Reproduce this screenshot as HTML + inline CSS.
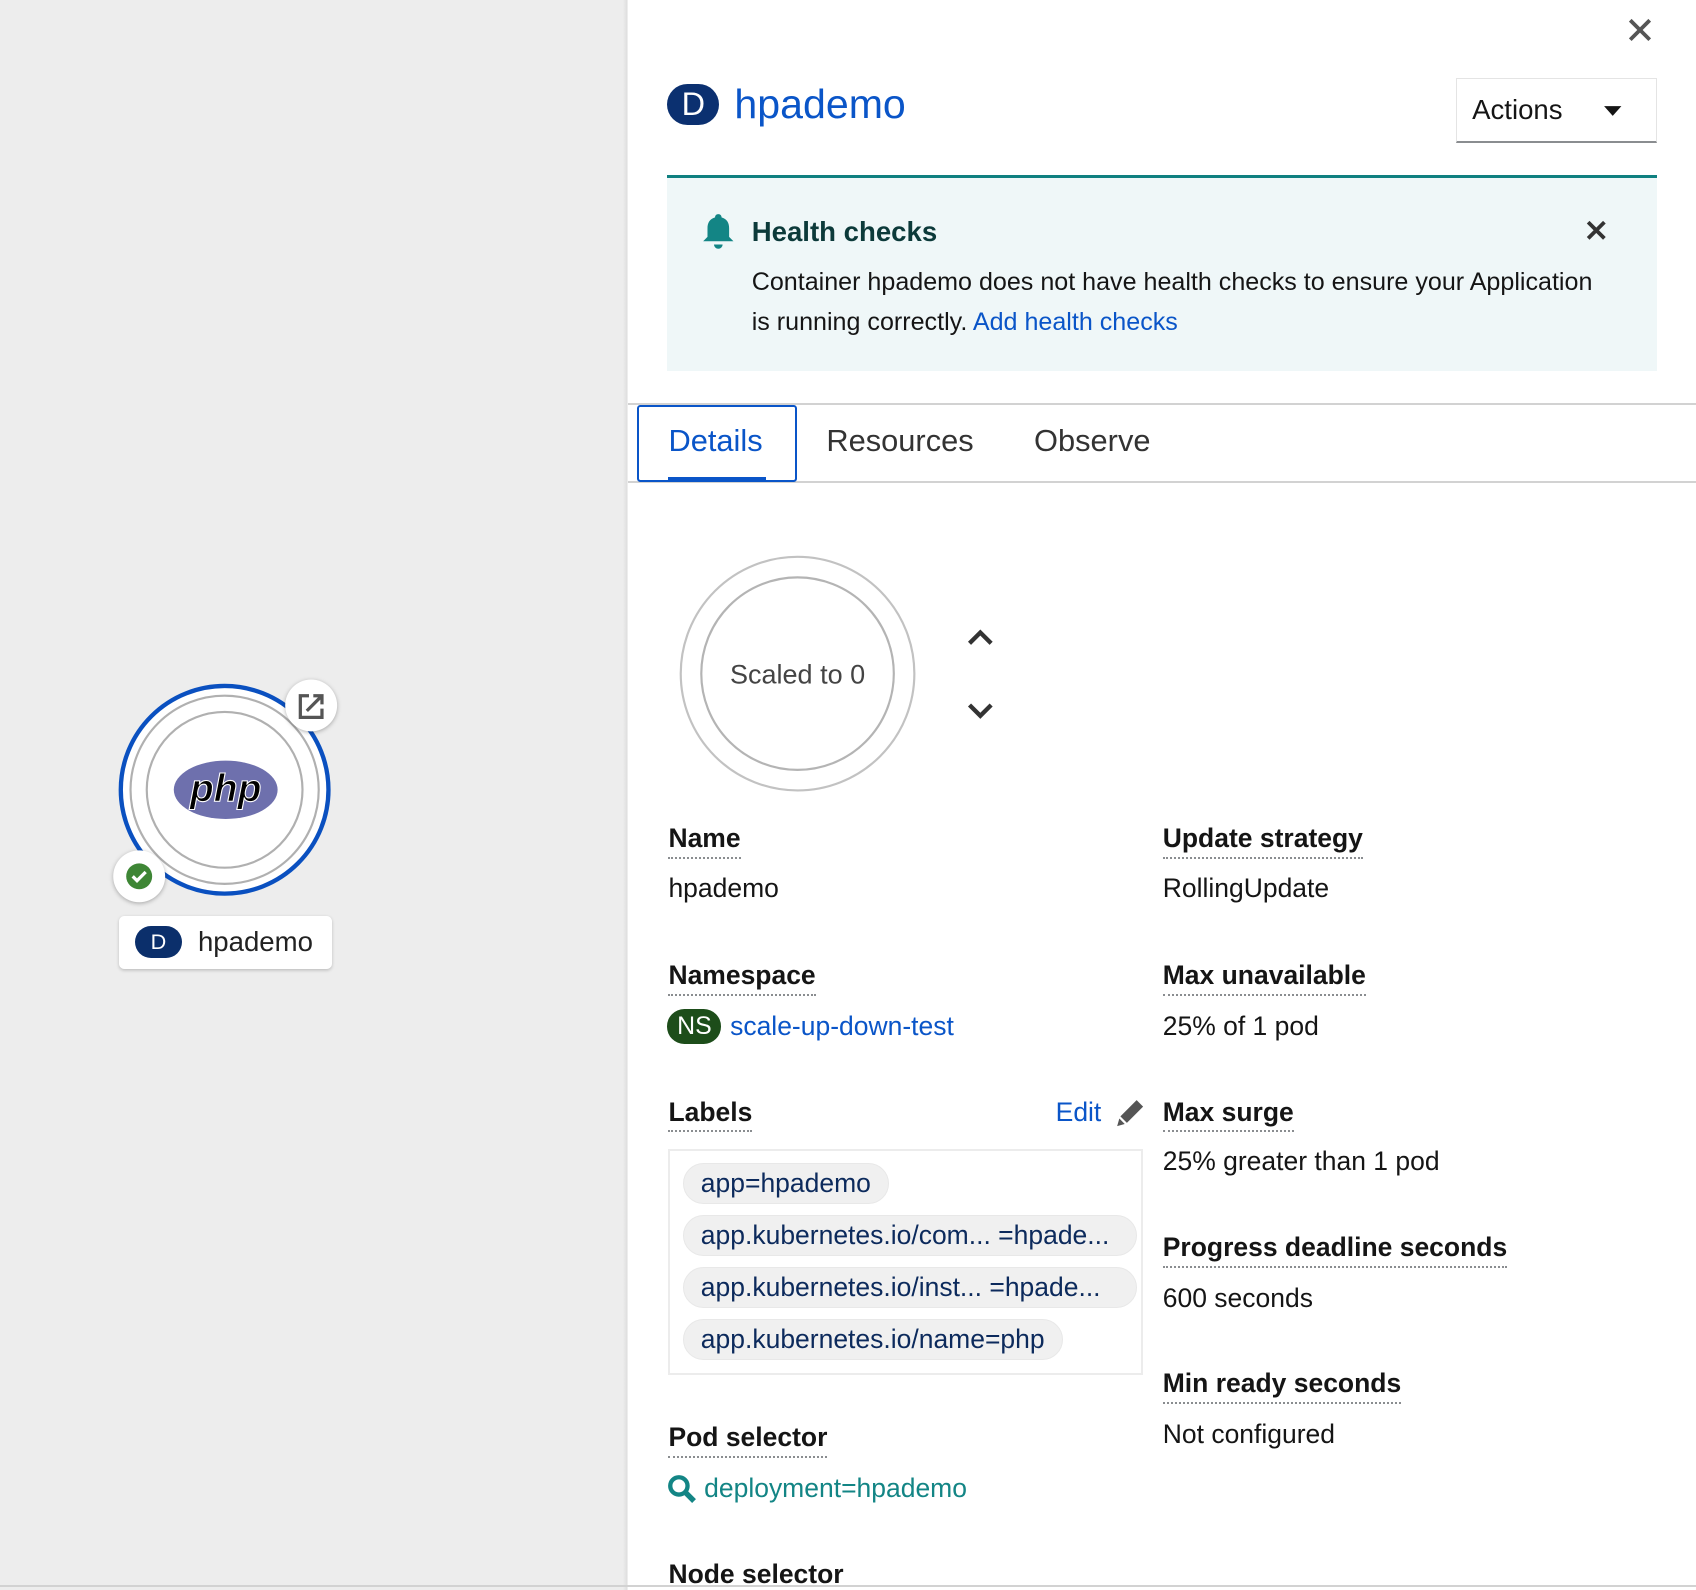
<!DOCTYPE html>
<html><head><meta charset="utf-8"><style>
html,body{margin:0;padding:0;width:1696px;height:1590px;overflow:hidden;background:#fff}
#w{position:relative;width:1568px;height:1470px;zoom:1.08163;font-family:"Liberation Sans",sans-serif;color:#151515}
.a{position:absolute;white-space:nowrap}
.lbl{font-weight:bold;font-size:24.5px;border-bottom:2px dotted #8a8d90;padding-bottom:2px;line-height:30px}
.val{font-size:24.5px;line-height:30px}
.chip{position:absolute;left:631px;height:38px;border-radius:19px;background:#f0f0f0;border:1px solid #e8e8e8;box-sizing:border-box;font-size:24.5px;line-height:36px;color:#0c2a5c;padding:0 16px;white-space:nowrap;overflow:hidden}
</style></head><body><div id="w">
<div class="a" style="left:0;top:0;width:580px;height:1470px;background:#ededed"></div>
<div class="a" style="left:576px;top:0;width:5px;height:1470px;background:linear-gradient(to right,rgba(0,0,0,0),rgba(0,0,0,.08))"></div>
<div class="a" style="left:0;top:1465px;width:1568px;height:2px;background:#d2d2d2"></div>

<svg class="a" style="left:90px;top:610px" width="240" height="300" viewBox="90 610 240 300">
<circle cx="208" cy="730" r="96" fill="#fff" stroke="#0a50c0" stroke-width="4"/>
<circle cx="208" cy="730" r="87" fill="none" stroke="#b0b0b0" stroke-width="2"/>
<circle cx="208" cy="730" r="72" fill="none" stroke="#b0b0b0" stroke-width="2"/>
<ellipse cx="209" cy="730" rx="48" ry="27" fill="#6e70ad"/>
<text x="209" y="741" text-anchor="middle" font-family="Liberation Sans" font-weight="bold" font-style="italic" font-size="36" fill="#000" stroke="#fff" stroke-width="1">php</text>
<circle cx="288" cy="652" r="24" fill="#fff" style="filter:drop-shadow(0 1px 2px rgba(0,0,0,.3))"/>
<path d="M286 643h-8v20h20v-8M284 657l14-14M290 643h8v8" fill="none" stroke="#555" stroke-width="3"/>
<circle cx="129" cy="810" r="24" fill="#fff" style="filter:drop-shadow(0 1px 2px rgba(0,0,0,.3))"/>
<circle cx="129" cy="810" r="12" fill="#3e8635"/>
<path d="M123 810l4 4 8-8" fill="none" stroke="#fff" stroke-width="3"/>
</svg>
<div class="a" style="left:110px;top:847px;width:197px;height:49px;background:#fff;border-radius:5px;box-shadow:0 1px 3px rgba(0,0,0,.2)"></div>
<div class="a" style="left:125px;top:856px;width:43px;height:30px;border-radius:15px;background:#0b2f6b;color:#fff;font-size:20px;line-height:30px;text-align:center">D</div>
<div class="a" style="left:183px;top:855px;font-size:25.5px;line-height:32px;color:#222">hpademo</div>

<svg class="a" style="left:1504px;top:16px" width="24" height="24"><path d="M3 3L21 21M21 3L3 21" stroke="#555" stroke-width="3.5"/></svg>
<div class="a" style="left:617px;top:78px;width:48px;height:38px;border-radius:19px;background:#0b3070;color:#fff;font-size:30px;line-height:38px;text-align:center">D</div>
<div class="a" style="left:679px;top:75px;font-size:38px;line-height:44px;color:#0a55c8">hpademo</div>
<div class="a" style="left:1346px;top:72px;width:186px;height:60px;box-sizing:border-box;border:1px solid #e4e4e4;border-bottom:2px solid #8a8d90"></div>
<div class="a" style="left:1361px;top:86px;font-size:25.5px;line-height:32px">Actions</div>
<svg class="a" style="left:1482px;top:96px" width="18" height="12"><path d="M1 2h16l-8 9z" fill="#151515"/></svg>

<div class="a" style="left:617px;top:162px;width:915px;height:181px;background:#eff7f8;border-top:3px solid #0f8080;box-sizing:border-box"></div>
<svg class="a" style="left:648px;top:196px" width="32" height="36" viewBox="0 0 32 36"><path d="M16 2c-2 0-3 1.5-3 3-5 1.5-7 5-7 10v8l-4 4h28l-4-4v-8c0-5-2-8.5-7-10 0-1.5-1-3-3-3z" fill="#138585"/><path d="M12 30h8a4 4 0 0 1-8 0z" fill="#138585"/></svg>
<div class="a" style="left:695px;top:199px;font-size:25.5px;font-weight:bold;line-height:32px;color:#0c3a3a">Health checks</div>
<svg class="a" style="left:1466px;top:203px" width="19" height="19"><path d="M2 2L17 17M17 2L2 17" stroke="#333" stroke-width="3.5"/></svg>
<div class="a" style="left:695px;top:242px;font-size:23.2px;line-height:37px;white-space:normal;width:795px">Container hpademo does not have health checks to ensure your Application is running correctly. <span style="color:#0a55c8">Add health checks</span></div>

<div class="a" style="left:581px;top:373px;width:987px;height:1px;background:#d2d2d2"></div>
<div class="a" style="left:581px;top:445px;width:987px;height:2px;background:#d2d2d2"></div>
<div class="a" style="left:589px;top:374px;width:148px;height:72px;box-sizing:border-box;border:2px solid #0a55c8;border-radius:3px"></div>
<div class="a" style="left:618px;top:441px;width:90px;height:3px;background:#0a55c8"></div>
<div class="a" style="left:618px;top:390px;font-size:28.5px;line-height:36px;color:#0a55c8">Details</div>
<div class="a" style="left:764px;top:390px;font-size:28.5px;line-height:36px;color:#333">Resources</div>
<div class="a" style="left:956px;top:390px;font-size:28.5px;line-height:36px;color:#333">Observe</div>

<svg class="a" style="left:620px;top:505px" width="320" height="240" viewBox="620 505 320 240">
<circle cx="737" cy="623" r="108" fill="none" stroke="#c2c2c2" stroke-width="2"/>
<circle cx="737" cy="623" r="89" fill="none" stroke="#b4b4b4" stroke-width="2"/>
<text x="737" y="632" text-anchor="middle" font-family="Liberation Sans" font-size="25" fill="#444">Scaled to 0</text>
<path d="M896 595l10-10 10 10" fill="none" stroke="#333" stroke-width="4"/>
<path d="M896 652l10 10 10-10" fill="none" stroke="#333" stroke-width="4"/>
</svg>

<div class="a lbl" style="left:618px;top:760px">Name</div>
<div class="a val" style="left:618px;top:806px">hpademo</div>
<div class="a lbl" style="left:618px;top:887px">Namespace</div>
<div class="a" style="left:617px;top:933px;width:50px;height:32px;border-radius:16px;background:#1d4d1a;color:#fff;font-size:23px;line-height:32px;text-align:center">NS</div>
<div class="a val" style="left:675px;top:934px;color:#0a55c8">scale-up-down-test</div>
<div class="a lbl" style="left:618px;top:1013px">Labels</div>
<div class="a val" style="left:976px;top:1013px;color:#0a55c8">Edit</div>
<svg class="a" style="left:1031px;top:1015px" width="28" height="28" viewBox="0 0 28 28"><path d="M20 2l6 6-15 15-6-6zM4 19l5 5-7 2z" fill="#555"/></svg>
<div class="a" style="left:618px;top:1062px;width:439px;height:209px;box-sizing:border-box;border:2px solid #ececec"></div>
<div class="chip" style="top:1075px">app=hpademo</div>
<div class="chip" style="top:1123px;width:420px">app.kubernetes.io/com... =hpade...</div>
<div class="chip" style="top:1171px;width:420px">app.kubernetes.io/inst... =hpade...</div>
<div class="chip" style="top:1219px">app.kubernetes.io/name=php</div>
<div class="a lbl" style="left:618px;top:1314px">Pod selector</div>
<svg class="a" style="left:617px;top:1363px" width="28" height="28" viewBox="0 0 28 28"><circle cx="11" cy="11" r="8" fill="none" stroke="#138585" stroke-width="4"/><path d="M17 17l8 8" stroke="#138585" stroke-width="5"/></svg>
<div class="a val" style="left:651px;top:1361px;color:#138585">deployment=hpademo</div>
<div class="a lbl" style="left:618px;top:1440px">Node selector</div>

<div class="a lbl" style="left:1075px;top:760px">Update strategy</div>
<div class="a val" style="left:1075px;top:806px">RollingUpdate</div>
<div class="a lbl" style="left:1075px;top:887px">Max unavailable</div>
<div class="a val" style="left:1075px;top:934px">25% of 1 pod</div>
<div class="a lbl" style="left:1075px;top:1013px">Max surge</div>
<div class="a val" style="left:1075px;top:1059px">25% greater than 1 pod</div>
<div class="a lbl" style="left:1075px;top:1138px">Progress deadline seconds</div>
<div class="a val" style="left:1075px;top:1185px">600 seconds</div>
<div class="a lbl" style="left:1075px;top:1264px">Min ready seconds</div>
<div class="a val" style="left:1075px;top:1311px">Not configured</div>
</div></body></html>
